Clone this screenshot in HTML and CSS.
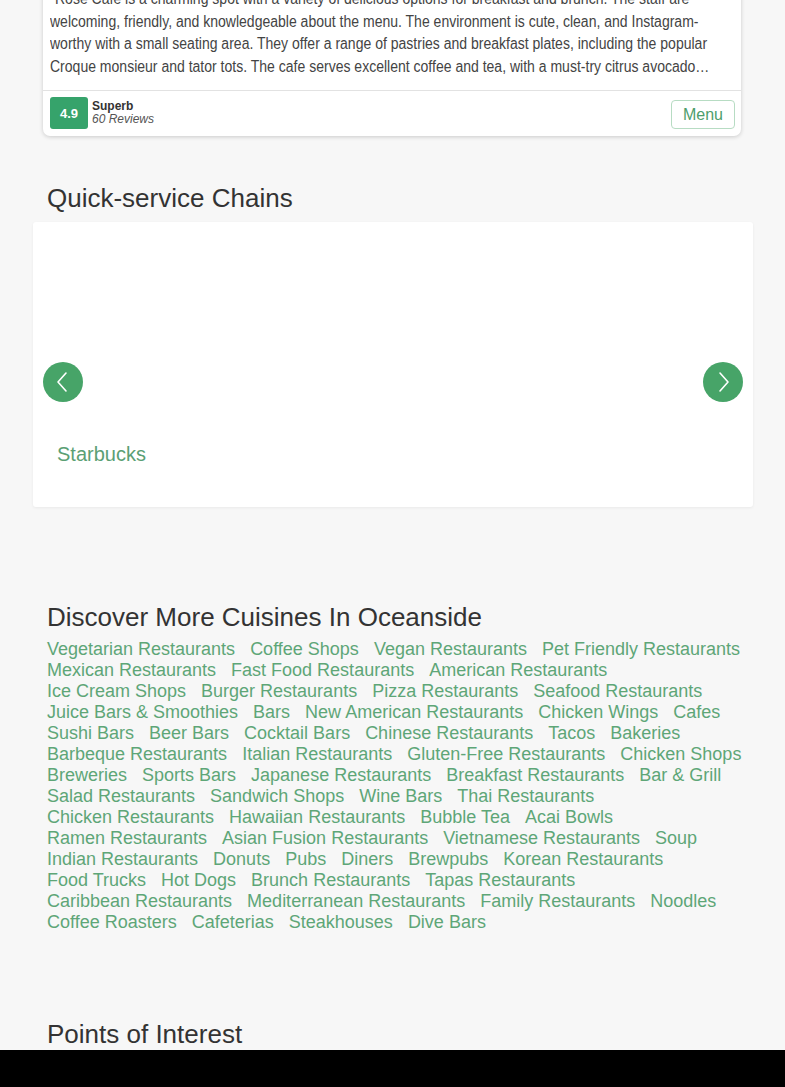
FILE: index.html
```html
<!DOCTYPE html>
<html lang="en">
<head>
<meta charset="utf-8">
<title>Oceanside</title>
<link rel="stylesheet" href="styles.css">
</head>
<body>
<div class="container">
  <div class="review-card">
    <div class="review-body">
      <p class="review-text">"Rose Cafe is a charming spot with a variety of delicious options for breakfast and brunch. The staff are welcoming, friendly, and knowledgeable about the menu. The environment is cute, clean, and Instagram-worthy with a small seating area. They offer a range of pastries and breakfast plates, including the popular Croque monsieur and tator tots. The cafe serves excellent coffee and tea, with a must-try citrus avocado toast and delicious lattes."</p>
    </div>
    <div class="review-footer">
      <div class="rating">
        <span class="badge">4.9</span>
        <div class="rating-label">
          <span class="rating-word">Superb</span>
          <span class="rating-count">60 Reviews</span>
        </div>
      </div>
      <a class="menu-btn" href="#">Menu</a>
    </div>
  </div>

  <h2 class="section-title quick-title">Quick-service Chains</h2>
  <div class="carousel">
    <div class="slide">
      <div class="slide-image"></div>
      <a class="slide-name" href="#">Starbucks</a>
    </div>
    <button class="arrow arrow-prev" aria-label="Previous">
      <svg width="12" height="22" viewBox="0 0 12 22"><polyline points="10,2 2,11 10,20" fill="none" stroke="#fff" stroke-width="1.6" stroke-linecap="round" stroke-linejoin="round"/></svg>
    </button>
    <button class="arrow arrow-next" aria-label="Next">
      <svg width="12" height="22" viewBox="0 0 12 22"><polyline points="2,2 10,11 2,20" fill="none" stroke="#fff" stroke-width="1.6" stroke-linecap="round" stroke-linejoin="round"/></svg>
    </button>
  </div>

  <h2 class="section-title discover-title">Discover More Cuisines In Oceanside</h2>
  <div class="links">
    <a href="#">Vegetarian Restaurants</a><a href="#">Coffee Shops</a><a href="#">Vegan Restaurants</a><a href="#">Pet Friendly Restaurants</a><a href="#">Mexican Restaurants</a><a href="#">Fast Food Restaurants</a><a href="#">American Restaurants</a><a href="#">Ice Cream Shops</a><a href="#">Burger Restaurants</a><a href="#">Pizza Restaurants</a><a href="#">Seafood Restaurants</a><a href="#">Juice Bars &amp; Smoothies</a><a href="#">Bars</a><a href="#">New American Restaurants</a><a href="#">Chicken Wings</a><a href="#">Cafes</a><a href="#">Sushi Bars</a><a href="#">Beer Bars</a><a href="#">Cocktail Bars</a><a href="#">Chinese Restaurants</a><a href="#">Tacos</a><a href="#">Bakeries</a><a href="#">Barbeque Restaurants</a><a href="#">Italian Restaurants</a><a href="#">Gluten-Free Restaurants</a><a href="#">Chicken Shops</a><a href="#">Breweries</a><a href="#">Sports Bars</a><a href="#">Japanese Restaurants</a><a href="#">Breakfast Restaurants</a><a href="#">Bar &amp; Grill</a><a href="#">Salad Restaurants</a><a href="#">Sandwich Shops</a><a href="#">Wine Bars</a><a href="#">Thai Restaurants</a><a href="#">Chicken Restaurants</a><a href="#">Hawaiian Restaurants</a><a href="#">Bubble Tea</a><a href="#">Acai Bowls</a><a href="#">Ramen Restaurants</a><a href="#">Asian Fusion Restaurants</a><a href="#">Vietnamese Restaurants</a><a href="#">Soup</a><a href="#">Indian Restaurants</a><a href="#">Donuts</a><a href="#">Pubs</a><a href="#">Diners</a><a href="#">Brewpubs</a><a href="#">Korean Restaurants</a><a href="#">Food Trucks</a><a href="#">Hot Dogs</a><a href="#">Brunch Restaurants</a><a href="#">Tapas Restaurants</a><a href="#">Caribbean Restaurants</a><a href="#">Mediterranean Restaurants</a><a href="#">Family Restaurants</a><a href="#">Noodles</a><a href="#">Coffee Roasters</a><a href="#">Cafeterias</a><a href="#">Steakhouses</a><a href="#">Dive Bars</a>
  </div>

  <h2 class="section-title poi-title">Points of Interest</h2>
  <div class="spacer"></div>
</div>
<div class="bottom-bar"></div>
</body>
</html>
```

FILE: styles.css
```css
* { box-sizing: border-box; }
html, body { margin: 0; padding: 0; }
body {
  background: #f7f7f7;
  font-family: "Liberation Sans", Arial, sans-serif;
  color: #333;
  overflow: hidden;
}
a { text-decoration: none; }
.container {
  padding: 0 32px 0 33px;
}
.review-card {
  margin: -20px 12px 0 10px;
  background: #fff;
  border-radius: 0 0 7px 7px;
  box-shadow: 0 1px 4px rgba(0,0,0,0.18);
}
.review-body {
  padding: 8px 7px 12px 7px;
  height: 110px;
  overflow: hidden;
}
.review-text {
  margin: 0;
  width: 757px;
  transform: scaleX(0.876);
  transform-origin: left top;
  font-family: "Liberation Sans Narrow", "Liberation Sans", Arial, sans-serif;
  font-size: 16px;
  line-height: 22.5px;
  color: #444;
  display: -webkit-box;
  -webkit-line-clamp: 4;
  -webkit-box-orient: vertical;
  overflow: hidden;
}
.review-footer {
  border-top: 1px solid #e2e2e2;
  display: flex;
  align-items: center;
  justify-content: space-between;
  padding: 6px 6px 7px 7px;
}
.rating {
  display: flex;
  align-items: center;
  gap: 4px;
}
.badge {
  width: 38px;
  height: 32px;
  background: #36a36b;
  color: #fff;
  font-weight: bold;
  font-size: 13px;
  border-radius: 3px;
  display: flex;
  align-items: center;
  justify-content: center;
}
.rating-label {
  display: flex;
  flex-direction: column;
  font-size: 12px;
  line-height: 13px;
}
.rating-word { font-weight: bold; color: #333; }
.rating-count { font-style: italic; color: #555; }
.menu-btn {
  display: inline-block;
  width: 64px;
  height: 29px;
  line-height: 27px;
  text-align: center;
  border: 1px solid #b7dcc3;
  border-radius: 4px;
  color: #4d9e6c;
  font-size: 16px;
  margin-top: 2px;
}
.section-title {
  font-weight: normal;
  font-size: 26px;
  line-height: 28.6px;
  color: #333;
  margin: 0;
  padding-left: 14px;
}
.quick-title { margin-top: 48px; margin-bottom: 9px; }
.carousel {
  position: relative;
  background: #fff;
  height: 285px;
  border-radius: 3px;
  box-shadow: 0 1px 3px rgba(0,0,0,0.06);
}
.slide {
  display: flex;
  flex-direction: column;
  padding: 0 24px;
}
.slide-image { height: 220px; }
.slide-name {
  font-size: 20px;
  line-height: 24px;
  color: #5b9f74;
}
.arrow {
  position: absolute;
  top: 140px;
  width: 40px;
  height: 40px;
  border-radius: 50%;
  border: none;
  background: #47a468;
  display: flex;
  align-items: center;
  justify-content: center;
  padding: 0;
  cursor: pointer;
}
.arrow-prev { left: 10px; }
.arrow-prev svg { margin-left: -2px; }
.arrow-next { right: 10px; }
.arrow-next svg { margin-left: 2px; }
.discover-title { margin-top: 96px; margin-bottom: 8px; }
.links {
  display: flex;
  flex-wrap: wrap;
  column-gap: 15px;
  padding: 0 8px 0 14px;
  font-size: 18px;
  line-height: 21px;
}
.links a { color: #5ea677; white-space: nowrap; }
.poi-title { margin-top: 87px; }
.spacer { height: 100px; }
.bottom-bar {
  position: fixed;
  left: 0;
  right: 0;
  bottom: 0;
  height: 37px;
  background: #000;
}
```
